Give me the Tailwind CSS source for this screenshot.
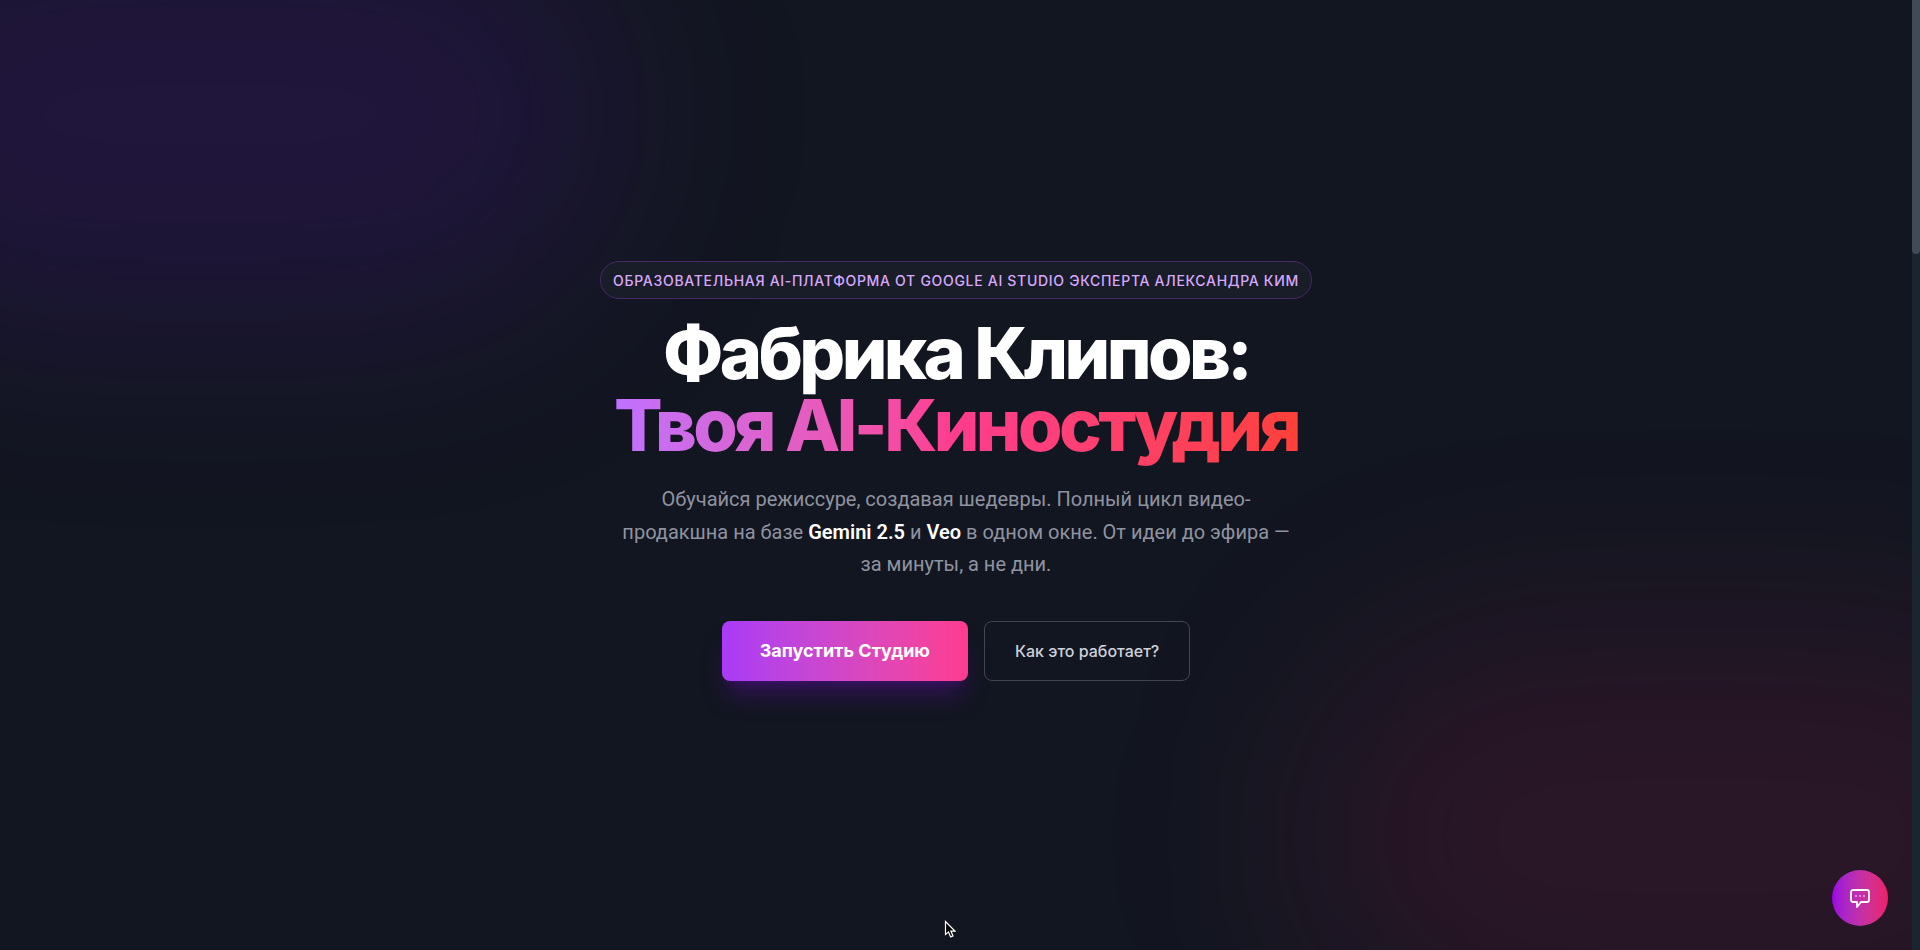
<!DOCTYPE html>
<html lang="ru">
<head>
    <meta charset="UTF-8">
    <meta name="viewport" content="width=device-width, initial-scale=1.0">
    <title>Фабрика Клипов</title>
    <script src="https://cdn.jsdelivr.net/npm/@tailwindcss/browser@4"></script>
</head>
<body class="bg-[#121620] text-white font-['Inter','Liberation_Sans',sans-serif] antialiased">
    <div class="flex min-h-screen overflow-hidden">
        <main class="relative flex flex-1 flex-col items-center justify-center overflow-hidden px-4">
            <!-- Фоновые пятна -->
            <div class="absolute -top-[10%] -left-[10%] h-[44%] w-[42%] rounded-full bg-[#6c10d0]/16 blur-[100px]"></div>
            <div class="absolute -right-[10%] -bottom-[10%] h-[44%] w-[42%] rounded-full bg-[#d01858]/13 blur-[100px]"></div>

            <section class="relative flex max-w-4xl flex-col items-center pb-2 text-center">
                <span class="mb-[18px] rounded-full border border-[#46286a] bg-[#181d28] px-3 pt-[9px] pb-[7px] text-sm font-medium tracking-wider uppercase text-[#d9a8ff]">Образовательная AI-платформа от Google AI Studio эксперта Александра Ким</span>
                <h1 class="mb-[22px] text-7xl leading-none font-extrabold tracking-tighter">
                    Фабрика Клипов:<br>
                    <span class="bg-linear-to-r from-[#c070ff] via-[#ff3c8e] to-[#ff4038] bg-clip-text text-transparent">Твоя AI-Киностудия</span>
                </h1>
                <p class="mb-10 max-w-2xl text-xl leading-relaxed font-['Roboto','Inter',sans-serif] text-[#8f93a0]">
                    Обучайся режиссуре, создавая шедевры. Полный цикл видео-продакшна на базе <strong class="font-semibold text-white">Gemini 2.5</strong> и <strong class="font-semibold text-white">Veo</strong> в одном окне. От идеи до эфира — за минуты, а не дни.
                </p>
                <div class="flex gap-4">
                    <button type="button" class="rounded-lg bg-linear-to-r from-[#a93af7] to-[#ff3b8f] px-[38px] py-4 text-lg font-bold shadow-xl shadow-[#5a0f9a]/40">Запустить Студию</button>
                    <button type="button" class="rounded-lg border border-[#414652] px-[30px] py-4 font-medium text-[#cdd1da]">Как это работает?</button>
                </div>
            </section>
        </main>

        <!-- Полоса прокрутки -->
        <div class="w-2 bg-[#1b252f]" aria-hidden="true">
            <div class="h-[254px] rounded-b-sm bg-[#414b58]"></div>
        </div>
    </div>

    <button type="button" aria-label="Открыть чат" class="fixed right-8 bottom-6 flex size-14 items-center justify-center rounded-full bg-linear-to-r from-[#9a00e0] to-[#ee1f68]">
        <svg class="size-6" viewBox="0 0 24 24" fill="none" stroke="currentColor" stroke-width="1.8" stroke-linejoin="round" stroke-linecap="round">
            <path d="M5 4h14a2 2 0 0 1 2 2v8a2 2 0 0 1-2 2h-6l-4 5v-5H5a2 2 0 0 1-2-2V6a2 2 0 0 1 2-2z"/>
            <path d="M8 10h.01M12 10h.01M16 10h.01" stroke="#f0b4ee"/>
        </svg>
    </button>

    <!-- Курсор -->
    <svg class="pointer-events-none absolute top-[920px] left-[944px] h-[19px] w-3" viewBox="0 0 12 19" fill="#000" stroke="#fff" stroke-width="1.2" aria-hidden="true">
        <path d="M1.5 1.5v13l3-2.6 2.2 5 2.3-1-2.1-4.8h4z"/>
    </svg>
</body>
</html>
